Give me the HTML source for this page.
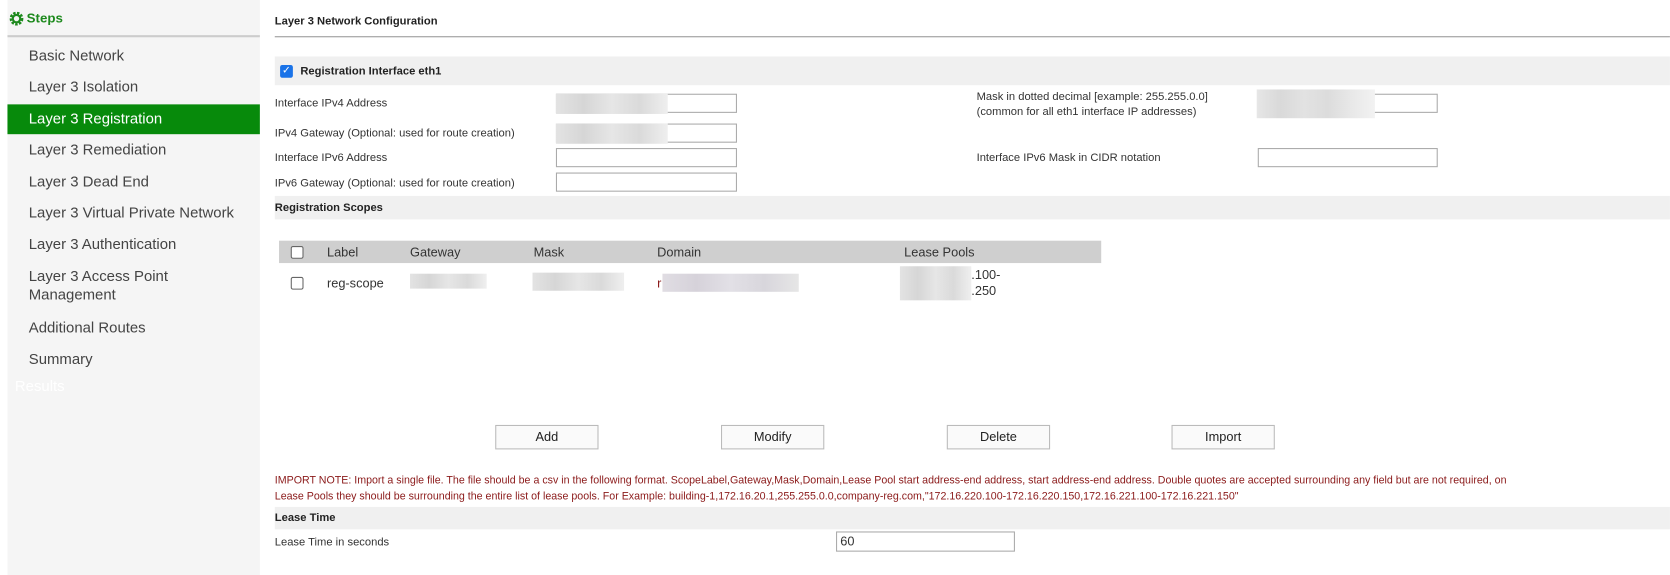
<!DOCTYPE html>
<html><head><meta charset="utf-8"><style>
*{margin:0;padding:0;box-sizing:border-box}
body{width:1670px;height:560px;background:#fff;font-family:"Liberation Sans",sans-serif;color:#333;position:relative;overflow:hidden}
#w{position:absolute;left:0;top:0;width:1568px;height:526px;transform:scale(1.065);transform-origin:0 0}
.a{position:absolute;white-space:nowrap}
.side{position:absolute;left:7px;top:0;width:237px;height:540px;background:#f5f5f5}
.si{position:absolute;left:27px;font-size:14px;color:#444}
.l{font-size:10.5px;color:#333}
.b{font-weight:bold;font-size:10.5px;color:#222}
.band{position:absolute;left:258px;width:1310px;background:#f0f0f0}
.in{position:absolute;border:1px solid #aaa;background:#fff;height:18px}
.blur{position:absolute;background:linear-gradient(90deg,#e3e3e3,#d6d6d6,#e6e6e6,#dadada,#efefef)}
.btn{position:absolute;top:399px;width:97px;height:23px;border:1px solid #bbb;background:#fafafa;font-size:12px;text-align:center;line-height:21px;color:#222}
.cb{position:absolute;width:12px;height:12px;border:1px solid #666;border-radius:2px;background:#fff}
.red{color:#8b1a1a;font-size:10px}
</style></head><body><div id="w">
<div class="side"></div>
<svg class="a" style="left:9px;top:11px" width="13" height="13" viewBox="0 0 13 13"><circle cx="6.5" cy="6.5" r="5" fill="none" stroke="#1e8a1e" stroke-width="3" stroke-dasharray="2.2 1.2"/><circle cx="6.5" cy="6.5" r="3.5" fill="none" stroke="#1e8a1e" stroke-width="2"/></svg>
<div class="a" style="left:25px;top:10px;font-size:12.5px;font-weight:bold;color:#1e8a1e">Steps</div>
<div class="a" style="left:7px;top:33px;width:237px;height:2px;background:#ccc"></div>
<div class="si a" style="top:44px">Basic Network</div>
<div class="si a" style="top:73px">Layer 3 Isolation</div>
<div class="a" style="left:7px;top:98px;width:237px;height:28px;background:#078a0b"></div>
<div class="si a" style="top:103px;color:#fff">Layer 3 Registration</div>
<div class="si a" style="top:132px">Layer 3 Remediation</div>
<div class="si a" style="top:162px">Layer 3 Dead End</div>
<div class="si a" style="top:191px">Layer 3 Virtual Private Network</div>
<div class="si a" style="top:221px">Layer 3 Authentication</div>
<div class="si a" style="top:251px;line-height:17px">Layer 3 Access Point<br>Management</div>
<div class="si a" style="top:299px">Additional Routes</div>
<div class="si a" style="top:329px">Summary</div>
<div class="si a" style="top:354px;left:14px;color:#fff">Results</div>

<div class="a b" style="left:258px;top:14px">Layer 3 Network Configuration</div>
<div class="a" style="left:258px;top:34px;width:1310px;height:1px;background:#999"></div>

<div class="band" style="top:53px;height:27px"></div>
<div class="a" style="left:263px;top:61px;width:12px;height:12px;background:#1a73e8;border-radius:2px;color:#fff;font-size:10px;line-height:12px;text-align:center">✓</div>
<div class="a b" style="left:282px;top:61px">Registration Interface eth1</div>

<div class="a l" style="left:258px;top:91px">Interface IPv4 Address</div>
<div class="in" style="left:522px;top:88px;width:170px"></div>
<div class="blur" style="left:522px;top:88px;width:105px;height:19px"></div>
<div class="a l" style="left:258px;top:119px">IPv4 Gateway (Optional: used for route creation)</div>
<div class="in" style="left:522px;top:116px;width:170px"></div>
<div class="blur" style="left:522px;top:116px;width:105px;height:19px"></div>
<div class="a l" style="left:258px;top:142px">Interface IPv6 Address</div>
<div class="in" style="left:522px;top:139px;width:170px"></div>
<div class="a l" style="left:258px;top:166px">IPv6 Gateway (Optional: used for route creation)</div>
<div class="in" style="left:522px;top:162px;width:170px"></div>

<div class="a l" style="left:917px;top:84px;line-height:14px">Mask in dotted decimal [example: 255.255.0.0]<br>(common for all eth1 interface IP addresses)</div>
<div class="in" style="left:1181px;top:88px;width:169px"></div>
<div class="blur" style="left:1180px;top:84px;width:111px;height:27px;background:linear-gradient(90deg,#e6e6e6,#d9d9d9,#e2e2e2,#dcdcdc,#e8e8e8,#f2f2f2)"></div>
<div class="a l" style="left:917px;top:142px">Interface IPv6 Mask in CIDR notation</div>
<div class="in" style="left:1181px;top:139px;width:169px"></div>

<div class="band" style="top:184px;height:22px"></div>
<div class="a b" style="left:258px;top:189px">Registration Scopes</div>

<div class="a" style="left:262px;top:226px;width:772px;height:21px;background:#cfcfcf"></div>
<div class="cb" style="left:273px;top:231px"></div>
<div class="a" style="left:307px;top:230px;font-size:12px">Label</div>
<div class="a" style="left:385px;top:230px;font-size:12px">Gateway</div>
<div class="a" style="left:501px;top:230px;font-size:12px">Mask</div>
<div class="a" style="left:617px;top:230px;font-size:12px">Domain</div>
<div class="a" style="left:849px;top:230px;font-size:12px">Lease Pools</div>
<div class="cb" style="left:273px;top:260px"></div>
<div class="a" style="left:307px;top:259px;font-size:12px">reg-scope</div>
<div class="blur" style="left:385px;top:257px;width:72px;height:14px"></div>
<div class="blur" style="left:500px;top:256px;width:86px;height:17px"></div>
<div class="a" style="left:617px;top:259px;font-size:12px;color:#8b1a1a">r</div>
<div class="blur" style="left:622px;top:257px;width:128px;height:17px;background:linear-gradient(90deg,#e0dde3,#d6d2da,#e2e0e6,#d8d6dc,#e6e6e6)"></div>
<div class="blur" style="left:845px;top:250px;width:67px;height:32px"></div>
<div class="a" style="left:912px;top:251px;font-size:12px;line-height:15px">.100-<br>.250</div>

<div class="btn" style="left:465px">Add</div>
<div class="btn" style="left:677px">Modify</div>
<div class="btn" style="left:889px">Delete</div>
<div class="btn" style="left:1100px">Import</div>

<div class="a red" style="left:258px;top:444px;line-height:15px">IMPORT NOTE: Import a single file. The file should be a csv in the following format. ScopeLabel,Gateway,Mask,Domain,Lease Pool start address-end address, start address-end address. Double quotes are accepted surrounding any field but are not required, on<br>Lease Pools they should be surrounding the entire list of lease pools. For Example: building-1,172.16.20.1,255.255.0.0,company-reg.com,"172.16.220.100-172.16.220.150,172.16.221.100-172.16.221.150"</div>

<div class="band" style="top:476px;height:21px"></div>
<div class="a b" style="left:258px;top:480px">Lease Time</div>
<div class="a l" style="left:258px;top:503px">Lease Time in seconds</div>
<div class="in" style="left:785px;top:499px;width:168px;height:19px;font-size:12px;padding-left:3px;line-height:17px">60</div>
</div></body></html>
